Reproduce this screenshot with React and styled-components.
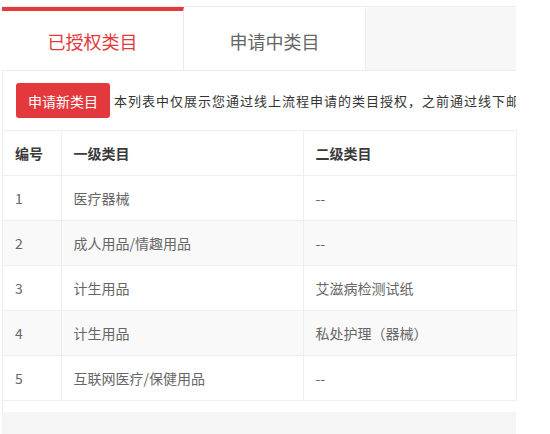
import React, { useState } from 'react'
import styled, { createGlobalStyle } from 'styled-components'

const GlobalStyle = createGlobalStyle`
  body {
    margin: 0;
    background: #fff;
    font-family: "Noto Sans CJK SC", "Liberation Sans", sans-serif;
  }
`

const Panel = styled.div`
  width: 514px;
  margin: 6px 0 0 2px;
`

const TabBar = styled.div`
  display: flex;
  height: 63px;
  background: #f7f7f7;
  border-top: 1px solid #ececec;
  border-bottom: 1px solid #ececec;
`

const Tab = styled.div`
  width: 182px;
  display: flex;
  align-items: center;
  justify-content: center;
  font-size: 18px;
  background: #fff;
  box-sizing: border-box;
  border-right: 1px solid #ececec;
  border-top: 4px solid ${(p) => (p.$active ? '#e4393c' : 'transparent')};
  color: ${(p) => (p.$active ? '#e4393c' : '#666')};
  cursor: pointer;
`

const Body = styled.div`
  border-left: 1px solid #ececec;
  padding-bottom: 11px;
`

const Toolbar = styled.div`
  display: flex;
  align-items: center;
  gap: 4px;
  padding: 12px 0 12px 13px;
  white-space: nowrap;
  overflow: hidden;
`

const Button = styled.button`
  flex: none;
  height: 35px;
  padding: 0 12px;
  border: none;
  border-radius: 3px;
  background: #e4393c;
  color: #fff;
  font-family: inherit;
  font-size: 14px;
`

const Notice = styled.span`
  font-size: 13px;
  letter-spacing: 1px;
  color: #333;
`

const Table = styled.table`
  width: 513px;
  border-collapse: collapse;
  table-layout: fixed;
  font-size: 14px;
`

const Th = styled.th`
  height: 44px;
  padding: 0 12px;
  text-align: left;
  font-weight: bold;
  color: #3a3a3a;
  border: 1px solid #eee;
  border-left: none;
`

const Row = styled.tr`
  background: ${(p) => (p.$striped ? '#f9f9f9' : '#fff')};
`

const Td = styled.td`
  height: 44px;
  padding: 0 12px;
  color: #666;
  border: 1px solid #eee;
  border-left: none;
`

const Footer = styled.div`
  height: 30px;
  background: #f5f5f5;
`

const rows = [
  ['1', '医疗器械', '--'],
  ['2', '成人用品/情趣用品', '--'],
  ['3', '计生用品', '艾滋病检测试纸'],
  ['4', '计生用品', '私处护理（器械）'],
  ['5', '互联网医疗/保健用品', '--'],
]

export default function App() {
  const [tab, setTab] = useState(0)
  const tabs = ['已授权类目', '申请中类目']

  return (
    <>
      <GlobalStyle />
      <Panel>
        <TabBar>
          {tabs.map((t, i) => (
            <Tab key={t} $active={tab === i} onClick={() => setTab(i)}>{t}</Tab>
          ))}
        </TabBar>
        <Body>
          <Toolbar>
            <Button type="button">申请新类目</Button>
            <Notice>本列表中仅展示您通过线上流程申请的类目授权，之前通过线下邮箱申请的类目授权请在类目管理中查看</Notice>
          </Toolbar>
          <Table>
            <colgroup>
              <col style={{ width: 58 }} />
              <col style={{ width: 242 }} />
              <col style={{ width: 213 }} />
            </colgroup>
            <thead>
              <tr>
                <Th>编号</Th>
                <Th>一级类目</Th>
                <Th>二级类目</Th>
              </tr>
            </thead>
            <tbody>
              {rows.map((r, i) => (
                <Row key={r[0]} $striped={i % 2 === 1}>
                  <Td>{r[0]}</Td>
                  <Td>{r[1]}</Td>
                  <Td>{r[2]}</Td>
                </Row>
              ))}
            </tbody>
          </Table>
        </Body>
        <Footer />
      </Panel>
    </>
  )
}
